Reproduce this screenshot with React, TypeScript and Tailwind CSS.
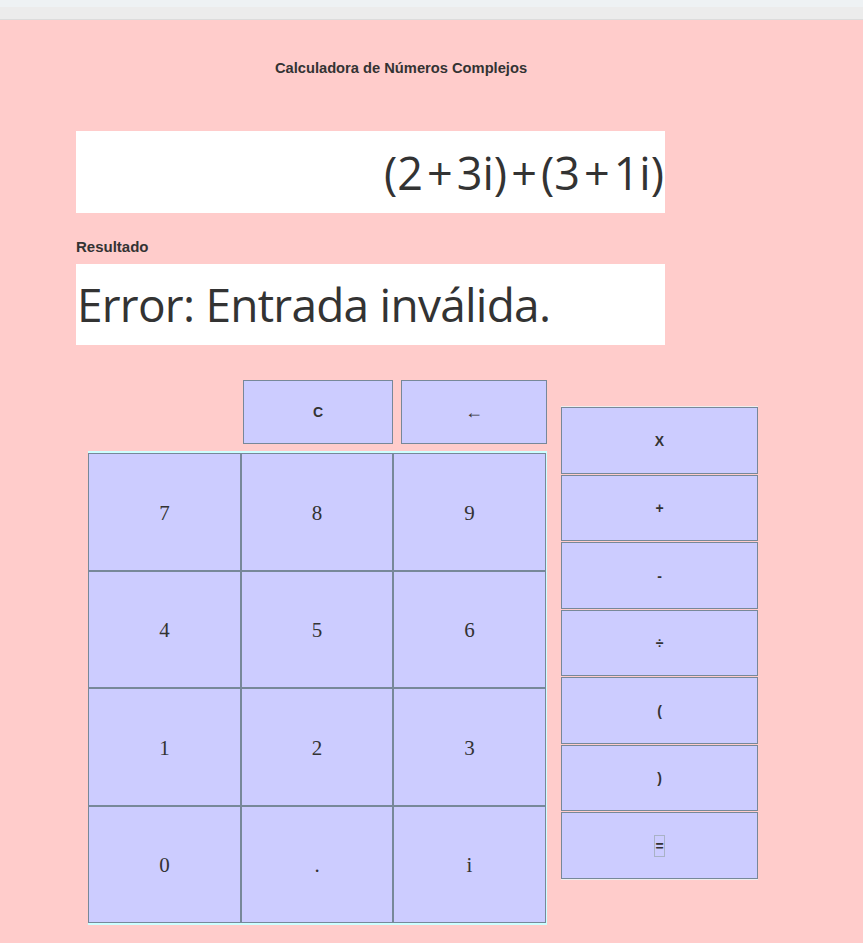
import React from "react";

const digits = ["7", "8", "9", "4", "5", "6", "1", "2", "3", "0", ".", "i"];
const ops = ["X", "+", "-", "÷", "(", ")"];

const Plus = () => <span className="px-[4px]">+</span>;

const App = () => {
  return (
    <div className="min-h-[943px] w-full bg-[#ffcccb] text-[#333] font-['Liberation_Sans',Arial,sans-serif]">
      {/* barra superior del navegador */}
      <div className="h-[7px] bg-[#eef2f4]" />
      <div className="h-[13px] bg-[#ececec] border-b border-[#dcdcdc]" />

      <div className="w-[802px] pt-[40px] text-center text-[14.7px] font-bold leading-[16px]">
        Calculadora de Números Complejos
      </div>

      <div className="ml-[76px] mt-[55px] flex h-[82px] w-[589px] items-center justify-end bg-white pr-[1px]">
        <span className="font-['Open_Sans','Noto_Sans',sans-serif] text-[45px] leading-none">
          (2<Plus />3i)<Plus />(3<Plus />1i)
        </span>
      </div>

      <div className="ml-[76px] mt-[26px] text-[15px] font-bold leading-[16px]">Resultado</div>

      <div className="ml-[76px] mt-[9px] flex h-[81px] w-[589px] items-center bg-white pl-[1px]">
        <span className="font-['Open_Sans','Noto_Sans',sans-serif] text-[46px] leading-none tracking-[-0.75px] pb-[2px]">
          Error: Entrada inválida.
        </span>
      </div>

      <div className="mt-[35px] flex items-start">
        <div className="ml-[88px] flex flex-col">
          <div className="flex">
            <button className="ml-[155px] h-[64px] w-[150px] border border-[#778899] bg-[#ccccff] text-[14px] font-bold">
              C
            </button>
            <button className="ml-[8px] h-[64px] w-[146px] border border-[#778899] bg-[#ccccff] text-[18px] font-bold">
              ←
            </button>
          </div>
          <div className="mt-[7px] grid w-[459px] grid-cols-[153px_152px_153px] border-t-2 border-r border-b-2 border-[#ccffff]">
            {digits.map((d) => (
              <button
                key={d}
                className="h-[117.5px] border border-[#778899] bg-[#ccccff] pt-[3px] font-['Liberation_Serif','Times_New_Roman',serif] text-[21px]"
              >
                {d}
              </button>
            ))}
          </div>
        </div>

        <div className="ml-[14px] mt-[26px] flex w-[197px] flex-col gap-[1px] border-y border-[#eeeeee]">
          {ops.map((o) => (
            <button
              key={o}
              className="h-[66.5px] border border-[#778899] bg-[#ccccff] pt-[2px] text-[14px] font-bold"
            >
              {o}
            </button>
          ))}
          <button className="flex h-[66.5px] items-center justify-center border border-[#778899] bg-[#ccccff] pt-[2px] text-[14px] font-bold">
            <span className="flex h-[22px] w-[11px] items-center justify-center border border-[#a9b2c6] leading-none">
              =
            </span>
          </button>
        </div>
      </div>
    </div>
  );
};

export default App;
